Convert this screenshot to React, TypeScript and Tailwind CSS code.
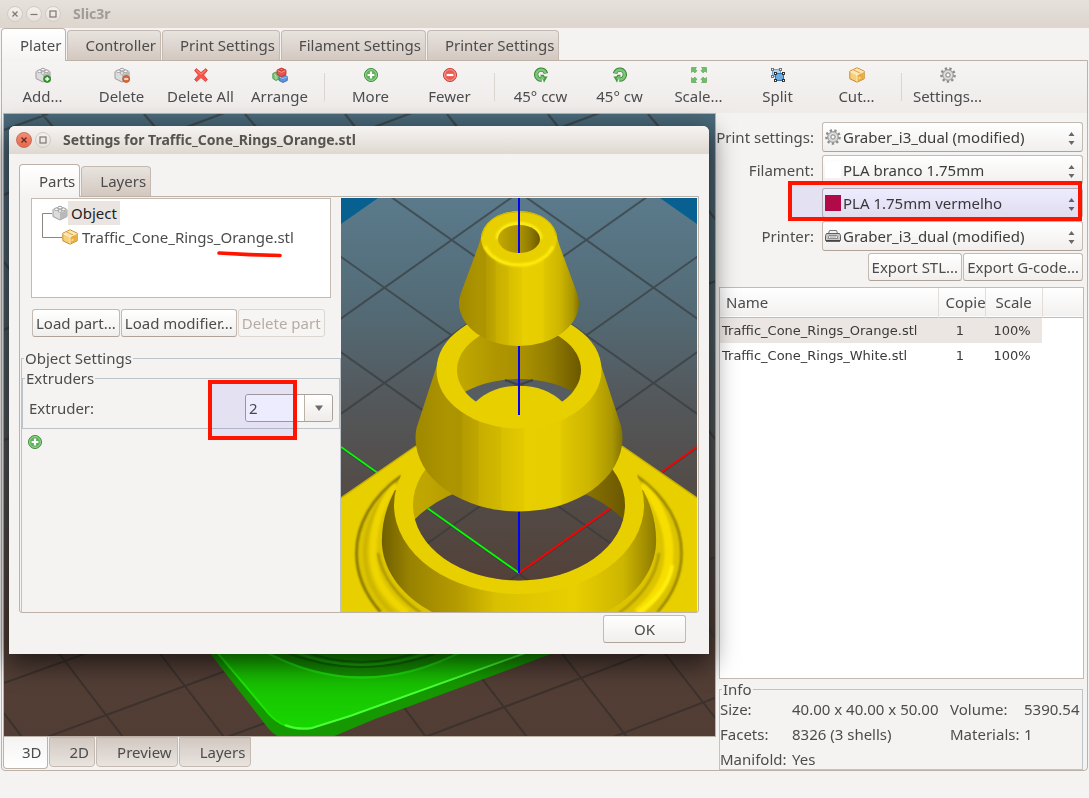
import React from "react";

const Svg = ({ children, className = "size-4 shrink-0" }: { children: React.ReactNode; className?: string }) => (
  <svg viewBox="0 0 16 16" className={className} aria-hidden="true">
    {children}
  </svg>
);

const BrickShape = () => (
  <g strokeLinejoin="round">
    <path d="M1 4.5 8 1.5l7 3v7L8 15l-7-3.5z" fill="#dcdcdc" stroke="#9b9b9b" />
    <path d="M8 8v7l7-3.5v-7z" fill="#b9b9b9" />
    <path d="M1 4.5 8 1.5l7 3L8 8z" fill="#f1f1f1" />
    <g fill="#fafafa" stroke="#8f8f8f" strokeWidth=".8">
      <ellipse cx="8" cy="2.6" rx="2" ry="1.3" />
      <ellipse cx="4.4" cy="4.3" rx="2" ry="1.3" />
      <ellipse cx="11.6" cy="4.3" rx="2" ry="1.3" />
      <ellipse cx="8" cy="6" rx="2" ry="1.3" />
    </g>
  </g>
);
const BrickIcon = () => <Svg><BrickShape /></Svg>;
const BrickAddIcon = () => (
  <Svg>
    <BrickShape />
    <circle cx="12.2" cy="12" r="3.5" fill="#3f9c35" stroke="#1f7a1b" strokeWidth=".7" />
    <path d="M12.2 10v4M10.2 12h4" stroke="#fff" strokeWidth="1.3" />
  </Svg>
);
const BrickDeleteIcon = () => (
  <Svg>
    <BrickShape />
    <circle cx="12.2" cy="12" r="3.5" fill="#dd6b3a" stroke="#b34a1c" strokeWidth=".7" />
    <path d="M10.2 12h4" stroke="#fff" strokeWidth="1.4" />
  </Svg>
);
const CrossIcon = () => (
  <Svg>
    <path d="M3.2 1.6 8 5.6l4.800-4L14.400 3.400 10.600 8l3.800 4.600-2 1.900L8 10.600l-4.400 3.900-2-1.900L5.400 8 1.600 3.400z" fill="#f4574a" stroke="#d8392e" strokeWidth=".8" strokeLinejoin="round" />
    <path d="M3.200 3 8 7.200 12.800 3" fill="none" stroke="#ff9a8f" strokeWidth=".8" />
  </Svg>
);
const BricksIcon = () => (
  <Svg>
    <g strokeLinejoin="round" strokeWidth=".8">
      <path d="M.8 6.500 4 5l4 1.500v5L4 13.500.8 11.500z" fill="#7cc576" stroke="#3d8f3a" />
      <path d="M2 7.500l2 1v4" stroke="#c6ecc2" fill="none" />
      <path d="M7 9.500l4-2 4.300 2v4L11 15.500l-4-2z" fill="#5c93d8" stroke="#3566a8" />
      <path d="M7.500 10l3.500 1.500 4-1.500" stroke="#a9cbf5" fill="none" />
      <path d="M5 3l4.500-2L14 3v4.500L9.500 9.800 5 7.500z" fill="#e8534a" stroke="#b92f29" />
      <path d="M5.500 3.600l4 1.800 4-1.800" stroke="#ff9e96" fill="none" />
      <ellipse cx="9.500" cy="2.600" rx="1.600" ry="1" fill="#ff8f87" stroke="#b92f29" />
    </g>
  </Svg>
);
const AddIcon = () => (
  <Svg>
    <circle cx="8" cy="8" r="6.500" fill="#5fb05a" stroke="#3c8e38" />
    <circle cx="8" cy="8" r="5.400" fill="none" stroke="#a7d9a2" strokeWidth=".9" />
    <path d="M8 4.600v6.800M4.600 8h6.800" stroke="#fff" strokeWidth="2.200" />
  </Svg>
);
const RemoveIcon = () => (
  <Svg>
    <circle cx="8" cy="8" r="6.500" fill="#ea5b52" stroke="#c8382f" />
    <circle cx="8" cy="8" r="5.400" fill="none" stroke="#f7a59f" strokeWidth=".9" />
    <path d="M4.600 8h6.800" stroke="#fff" strokeWidth="2.200" />
  </Svg>
);
const RotateShape = () => (
  <g>
    <path d="M13 6.500A5 5 0 1 0 8.600 12.600" fill="none" stroke="#3a8a35" strokeWidth="4.400" />
    <path d="M7.600 7.800h3l1 1.700h3l-1.600 2.500-2 3.800-1-3L7.600 10.500z" fill="#3f9a38" />
    <path d="M12.700 6.200A4.800 4.800 0 1 0 8.600 12.400" fill="none" stroke="#7fc67a" strokeWidth="2.600" />
    <path d="M8.500 9.500l2.500 2.500" stroke="#7fc67a" strokeWidth="2" />
  </g>
);
const CcwIcon = () => <Svg><RotateShape /></Svg>;
const CwIcon = () => <Svg><g transform="matrix(-1 0 0 1 16 0)"><RotateShape /></g></Svg>;
const ScaleIcon = () => (
  <Svg>
    <g fill="#6fbf69" stroke="#3e9038" strokeWidth=".5" strokeLinejoin="round">
      <path d="M.5.500h5L4.200 1.900 6 3.700 3.800 5.900 2 4.100.5 5.500z" />
      <path d="M15.500.500h-5l1.300 1.400L10 3.700l2.200 2.200L14 4.100l1.500 1.400z" />
      <path d="M.5 15.500h5l-1.300-1.400L6 12.300l-2.200-2.200L2 11.900.5 10.500z" />
      <path d="M15.500 15.500h-5l1.300-1.400L10 12.300l2.200-2.200 1.800 1.800 1.500-1.400z" />
    </g>
  </Svg>
);
const SplitIcon = () => (
  <Svg>
    <path d="M2.500 2.500h8v7h-8z" fill="#a9d3f2" stroke="#6aa5d4" />
    <path d="M5.500 6.500h8v7h-8z" fill="#6aabe2" stroke="#2e6fae" />
    <g fill="#fff" strokeWidth=".9">
      <rect x="1.500" y="1.500" width="2" height="2" stroke="#666" />
      <rect x="9.500" y="1.500" width="2" height="2" stroke="#666" />
      <rect x="1.500" y="8.500" width="2" height="2" stroke="#666" />
      <rect x="4.500" y="5.500" width="2" height="2" stroke="#222" />
      <rect x="12.500" y="5.500" width="2" height="2" stroke="#222" />
      <rect x="4.500" y="12.500" width="2" height="2" stroke="#222" />
      <rect x="12.500" y="12.500" width="2" height="2" stroke="#222" />
    </g>
  </Svg>
);
const PackageIcon = () => (
  <Svg>
    <g strokeLinejoin="round">
      <path d="M.8 4.200 8 .8l7.200 3.400v7.600L8 15.200.8 11.800z" fill="#f6cf7a" stroke="#c98a2c" />
      <path d="M8 8l6.700-3.400v7L8 14.800z" fill="#e9ae43" />
      <path d="M1.300 4.400 8 1.300l6.700 3.100L8 7.600z" fill="#fbe7b4" />
      <path d="M4.500 2.900l6.800 3.200v3" fill="none" stroke="#e0a040" />
      <path d="M1.300 4.600 8 7.900l6.700-3.300M8 7.900v6.800" fill="none" stroke="#fff2cf" strokeWidth=".9" />
      <path d="M9.500 10.500l2-1v2l-2 1z" fill="#f7e08c" />
    </g>
  </Svg>
);
const CogIcon = () => (
  <Svg>
    <circle cx="8" cy="8" r="6.600" fill="none" stroke="#8d8d8d" strokeWidth="2.400" strokeDasharray="2.300 2.307" />
    <circle cx="8" cy="8" r="5.400" fill="#c9c9c9" stroke="#8a8a8a" strokeWidth=".8" />
    <circle cx="8" cy="8" r="3.700" fill="none" stroke="#e4e4e4" />
    <circle cx="8" cy="8" r="2.100" fill="#f7f7f7" stroke="#868686" strokeWidth=".9" />
  </Svg>
);
const PrinterIcon = () => (
  <Svg>
    <path d="M3.500 5.500 4.500 2.500h7l1 3" fill="#f2f2f2" stroke="#777" />
    <path d="M1.500 5.500h13l1 2v5h-15v-5z" fill="#c8c8c8" stroke="#5e5e5e" strokeLinejoin="round" />
    <path d="M4 7.500h8l.8 3H3.200z" fill="#efefef" stroke="#777" strokeWidth=".8" />
    <path d="M1 13h14" stroke="#3f3f3f" strokeWidth="1.600" />
    <path d="M5 9h6" stroke="#888" strokeWidth=".8" />
  </Svg>
);

const WindowButton = ({ kind, close }: { kind: "close" | "min" | "max"; close?: boolean }) => (
  <button
    type="button"
    aria-label={kind}
    className={
      close
        ? "size-4 rounded-full border border-[#c9705a] bg-linear-to-b from-[#f28d76] to-[#e8664c] text-[#5c2a1e]"
        : "size-4 rounded-full border border-[#d3cbc4] bg-linear-to-b from-[#f4f1ee] to-[#e6e1dc] text-[#7d7872]"
    }
  >
    <svg viewBox="0 0 14 14" className="size-full" fill="none" stroke="currentColor" strokeWidth="1.200" aria-hidden="true">
      {kind === "close" && <path d="M4.500 4.500l5 5M9.500 4.500l-5 5" />}
      {kind === "min" && <path d="M3.500 7.500h7" />}
      {kind === "max" && <rect x="4" y="4" width="6" height="6" />}
    </svg>
  </button>
);

const tabStyles = {
  top: {
    active: "relative -mb-px h-[33px] rounded-t border border-b-0 border-[#bdb2a8] bg-linear-to-b from-white to-[#f5f3f2] pr-1 pl-[18px]",
    idle: "ml-px h-[30px] rounded-t border border-b-0 border-[#c4bab1] bg-linear-to-b from-[#e8e3de] to-[#d3c8c0] pr-1 pl-[17px]",
  },
  dialog: {
    active: "relative -mb-px h-[33px] rounded-t border border-b-0 border-[#bdb2a8] bg-linear-to-b from-white to-[#f5f3f2] pr-1 pl-[19px]",
    idle: "ml-px h-[30px] rounded-t border border-b-0 border-[#c4bab1] bg-linear-to-b from-[#e8e3de] to-[#d3c8c0] pr-1 pl-[18px]",
  },
  bottom: {
    active: "mr-px h-8 rounded-b border border-t-0 border-[#bdb2a8] bg-linear-to-b from-[#f5f3f2] to-white pr-[5px] pl-[18px]",
    idle: "mr-px h-[30px] rounded-b border border-[#c4bab1] bg-linear-to-b from-[#d2c8c1] to-[#e9e4df] pr-[5px] pl-5",
  },
};

const Tab = ({ label, active, kind = "top" }: { label: string; active?: boolean; kind?: keyof typeof tabStyles }) => (
  <button type="button" role="tab" aria-selected={!!active} className={tabStyles[kind][active ? "active" : "idle"]}>
    {label}
  </button>
);

const Tool = ({ icon, label }: { icon: React.ReactNode; label: string }) => (
  <button type="button" className="flex w-[79px] shrink-0 flex-col items-center gap-[3px] pt-[6px] leading-5 whitespace-nowrap">
    {icon}
    {label}
  </button>
);
const Separator = () => <div className="mt-3 mr-[6px] ml-[5px] h-7 w-px shrink-0 bg-[#dad5cf]" />;

const PushButton = ({ label, className = "", disabled }: { label: string; className?: string; disabled?: boolean }) => (
  <button
    type="button"
    disabled={disabled}
    className={
      "h-7 rounded-[3px] border px-[3px] whitespace-nowrap " +
      (disabled
        ? "border-[#dcd6d1] bg-[#f7f5f4] text-[#b5ada5] "
        : "border-[#c3bab2] border-b-[#aea299] bg-linear-to-b from-white to-[#f1efed] ") +
      className
    }
  >
    {label}
  </button>
);

const Preset = ({ id, label, icon, value }: { id: string; label?: string; icon: React.ReactNode; value: string }) => (
  <div className="flex h-[30px] items-center justify-end pr-px">
    {label && <label htmlFor={id} className="whitespace-nowrap">{label}</label>}
    <div className="relative ml-2 w-[261px] shrink-0">
      <select
        id={id}
        aria-label={label ? undefined : "Second filament"}
        className="h-[30px] w-full appearance-none rounded-[3px] border border-[#c3bab2] border-b-[#aea299] bg-linear-to-b from-white to-[#f1efed] pl-5 text-[#3c3c3c]"
      >
        <option>{value}</option>
      </select>
      <span className="pointer-events-none absolute top-[7px] left-[3px]">{icon}</span>
      <svg viewBox="0 0 7 13" className="pointer-events-none absolute top-[10px] right-2 h-[13px] w-[7px]" fill="#6b6763" aria-hidden="true">
        <path d="M3.500 0 6.500 4h-6zM3.500 13 6.500 9h-6z" />
      </svg>
    </div>
  </div>
);

const MainScene = () => (
  <svg viewBox="4 114 711 622" preserveAspectRatio="xMidYMid slice" className="absolute inset-0 size-full" role="img" aria-label="Build plate">
    <defs>
      <linearGradient id="bed" x1="0" y1="0" x2="0" y2="1">
        <stop offset="0" stopColor="#4a6a7b" />
        <stop offset=".5" stopColor="#50575b" />
        <stop offset=".85" stopColor="#533f36" />
        <stop offset="1" stopColor="#523d34" />
      </linearGradient>
      <linearGradient id="plate" x1="0" y1="0" x2="0" y2="1">
        <stop offset="0" stopColor="#17ae00" />
        <stop offset="1" stopColor="#18d800" />
      </linearGradient>
    </defs>
    <rect x="4" y="114" width="711" height="622" fill="url(#bed)" />
    <g stroke="#3a3f42" strokeOpacity=".75" strokeWidth="2.200">
      <path d="M42 114l12 14M144 114l12 14M245 114l12 14M345 114l11 14M447 114l11 14M548 114l11 14M648 114l12 14M4 130l44-16M184 128l43-16M374 127l43-16M562 127l43-16" />
      <path d="M4 195l6-3M4 262l6 8M4 330l6-3M4 440l6-2M708 210l8 10M708 284l8-3M708 430l8 10M708 560l8-3M708 628l8 10" />
    </g>
    <path d="M4 683l86-31M47 737l200-74M227 737l60-22M425 737l230-87M613 737l102-39M4 713l18 24M58 652l65 85M158 651l66 86M400 702l26 35M463 654l64 83M560 651l67 86M663 651l53 68" stroke="#3c322d" strokeWidth="2" fill="none" />
    <path d="M205 647 268 728 Q274 736 286 740L325 740 375 719 570 647z" fill="#159800" />
    <path d="M212 647 264 708Q282 733 312 728L350 716 540 647z" fill="url(#plate)" />
    <path d="M216 651 264 708Q282 733 312 728" fill="none" stroke="#1ce500" strokeWidth="2" />
    <path d="M285 725Q298 730 312 728L350 716 528 652" fill="none" stroke="#4bff35" strokeWidth="2" />
    <path d="M262 648Q360 708 465 648z" fill="#148f00" />
    <path d="M262 650Q360 705 465 650" fill="none" stroke="#1dd90a" strokeWidth="2.500" />
    <path d="M280 650Q360 684 445 650M300 650Q360 674 425 650" fill="none" stroke="#0e6f00" strokeWidth="2" />
    <path d="M290 650Q360 680 435 650" fill="none" stroke="#1ba80c" strokeWidth="2" />
  </svg>
);

const PartScene = () => (
  <svg viewBox="341 198 356 414" preserveAspectRatio="xMidYMid slice" className="size-full" role="img" aria-label="Traffic cone rings preview">
    <defs>
      <linearGradient id="floor" gradientUnits="userSpaceOnUse" x1="0" y1="198" x2="0" y2="612">
        <stop offset="0" stopColor="#5a7a8b" />
        <stop offset=".28" stopColor="#536a75" />
        <stop offset=".5" stopColor="#53575a" />
        <stop offset=".68" stopColor="#534d49" />
        <stop offset="1" stopColor="#523d34" />
      </linearGradient>
      <linearGradient id="wall">
        <stop offset="0" stopColor="#a08800" />
        <stop offset=".1" stopColor="#a89000" />
        <stop offset=".16" stopColor="#ad9500" />
        <stop offset=".22" stopColor="#ac9400" />
        <stop offset=".23" stopColor="#b59c00" />
        <stop offset=".3" stopColor="#bfa600" />
        <stop offset=".31" stopColor="#c8af00" />
        <stop offset=".41" stopColor="#d1b900" />
        <stop offset=".42" stopColor="#d9c000" />
        <stop offset=".52" stopColor="#e2c900" />
        <stop offset=".53" stopColor="#e8cf00" />
        <stop offset=".7" stopColor="#e6cd00" />
        <stop offset=".71" stopColor="#dfc700" />
        <stop offset=".84" stopColor="#cdb600" />
        <stop offset=".95" stopColor="#aa9600" />
        <stop offset="1" stopColor="#837300" />
      </linearGradient>
      <linearGradient id="inner">
        <stop offset="0" stopColor="#c2a900" />
        <stop offset=".3" stopColor="#b09700" />
        <stop offset=".55" stopColor="#a78f00" />
        <stop offset=".75" stopColor="#937d00" />
        <stop offset="1" stopColor="#6b5800" />
      </linearGradient>
      <linearGradient id="lower">
        <stop offset="0" stopColor="#6f5f00" />
        <stop offset=".1" stopColor="#988200" />
        <stop offset=".28" stopColor="#b69c00" />
        <stop offset=".42" stopColor="#dac100" />
        <stop offset=".7" stopColor="#e8cf00" />
        <stop offset=".88" stopColor="#cdb600" />
        <stop offset="1" stopColor="#8d7a00" />
      </linearGradient>
      <clipPath id="hole1"><ellipse cx="519" cy="505" rx="106" ry="75.500" /></clipPath>
      <clipPath id="hole2"><ellipse cx="519" cy="370" rx="62" ry="44" /></clipPath>
      <clipPath id="opening1"><ellipse cx="519" cy="572" rx="128" ry="91" /></clipPath>
      <filter id="soft" x="-20%" y="-20%" width="140%" height="140%"><feGaussianBlur stdDeviation="1" /></filter>
      <g id="grid">
        <rect x="341" y="198" width="356" height="414" fill="url(#floor)" />
        <path
          d="M333 60.400 705 324.100M333 155.800 705 419.500M333 251.200 705 514.900M333 346.600 705 610.300M333 442 705 705.700M705 60.400 333 324.100M705 155.800 333 419.500M705 251.200 333 514.900M705 346.600 333 610.300M705 442 333 705.700"
          stroke="#35393b"
          strokeOpacity=".65"
          strokeWidth="2"
        />
      </g>
    </defs>
    <use href="#grid" />
    <path d="M341 198h37l-37 26zM697 198h-37l37 26z" fill="#07608f" />
    <path d="M341 447 519 573" stroke="#0f0" strokeWidth="1.800" />
    <path d="M697 447 519 573" stroke="#f00" strokeWidth="1.800" />

    <path d="M341 498 416 446h206l75 52v114H341z" fill="#e8cf00" />
    <path d="M341 498 416 446M622 446l75 52" stroke="#c6b000" strokeWidth="1.500" />

    <g>
      <path d="M401 476C371 497 355 525 355 553c0 22 9 42 24 59h280c15-17 24-37 24-59 0-28-16-56-46-77z" fill="#dcc400" />
      <path d="M398 482C374 504 365 530 365 553c0 24 10 44 28 60" fill="none" stroke="#cdb500" strokeWidth="4" filter="url(#soft)" />
      <path d="M396 484C379 505 373 530 373 553c0 24 12 44 34 60" fill="none" stroke="#efd600" strokeWidth="7" filter="url(#soft)" />
      <path d="M642 484c18 20 27 45 27 69 0 24-12 44-32 60" fill="none" stroke="#f7de00" strokeWidth="9" filter="url(#soft)" />
      <path d="M672 565c-2 20-16 35-34 48" fill="none" stroke="#ffef10" strokeWidth="4" filter="url(#soft)" />
      <path d="M401 476C371 497 356.500 526 356.500 553c0 22 9 42 24 59" fill="none" stroke="#695b00" strokeWidth="2" filter="url(#soft)" />
      <path d="M637 476c30 21 44.500 49 44.500 77 0 22-9 42-24 59" fill="none" stroke="#7a6a00" strokeWidth="1.800" filter="url(#soft)" />
      <path d="M378 553c4 24 20 44 43 60M659 553c-3 24-18 44-40 60" fill="none" stroke="#a08b00" strokeWidth="2" filter="url(#soft)" />
    </g>
    <path d="M395 490C387 505 381 524 382 545c2 28 22 52 50 67h174c28-15 48-39 50-67 1-21-5-40-13-55z" fill="url(#lower)" />
    <ellipse cx="519" cy="505" rx="125" ry="89" fill="#e8cf00" />
    <ellipse cx="519" cy="505" rx="106" ry="75.500" fill="url(#inner)" />
    <g clipPath="url(#hole1)">
      <g clipPath="url(#opening1)">
        <use href="#grid" />
        <path d="M341 447 519 573" stroke="#0f0" strokeWidth="1.800" />
        <path d="M697 447 519 573" stroke="#f00" strokeWidth="1.800" />
      </g>
    </g>
    <path d="M519 505v68" stroke="#00f" strokeWidth="2" />

    <path d="M438 362 416.500 428Q415.500 433 415.500 438A103.500 73.500 0 0 0 622.500 438Q622.500 433 621 426L600 362z" fill="url(#wall)" />
    <ellipse cx="519" cy="370" rx="82.500" ry="58.500" fill="#e8cf00" />
    <g clipPath="url(#hole2)">
      <rect x="457" y="326" width="124" height="88" fill="url(#inner)" />
      <ellipse cx="519" cy="443" rx="90" ry="64" fill="#555d62" />
      <path d="M505 380l28 10M533 380l-28 10" stroke="#3d4245" strokeWidth="2" />
    </g>
    <path d="M475.500 402A53 38 0 0 1 562.500 402L560 412Q519 430 478 412z" fill="#e8cf00" />
    <path d="M519 340v75" stroke="#00f" strokeWidth="2" />

    <path d="M482 232Q481 238 478 247L461 293Q459 298 459 303A60 43 0 0 0 579 303Q579 298 577 293L560 247Q557 238 556 232z" fill="url(#wall)" />
    <ellipse cx="519" cy="238.500" rx="38" ry="27.500" fill="#e8cf00" />
    <path d="M485 246c5 11 17 19 34 19s29-8 34-19" fill="none" stroke="#ffee10" strokeWidth="3" filter="url(#soft)" />
    <path d="M482 236c2-14 16-24 37-24s35 10 37 24" fill="none" stroke="#c9b200" strokeWidth="1" />
    <path d="M497 239a22 15.500 0 0 1 44 0" fill="none" stroke="#fff01a" strokeWidth="3" filter="url(#soft)" />
    <ellipse cx="519" cy="239" rx="21" ry="14" fill="url(#inner)" />
    <path d="M519 198v55" stroke="#00f" strokeWidth="2" />
  </svg>
);

const SettingsDialog = () => (
  <section
    role="dialog"
    aria-label="Settings for Traffic_Cone_Rings_Orange.stl"
    className="absolute top-[126px] left-[9px] flex h-[528px] w-[700px] flex-col rounded-t-md bg-[#f5f3f2] shadow-[0_8px_26px_2px_rgba(0,0,0,0.6)]"
  >
    <header className="flex h-7 shrink-0 items-center gap-[3px] rounded-t-md bg-linear-to-b from-[#f6f4f2] to-[#dfd8d1] pl-[7px]">
      <WindowButton kind="close" close />
      <WindowButton kind="max" />
      <h2 className="ml-[9px] text-sm font-bold text-[#57534e]">Settings for Traffic_Cone_Rings_Orange.stl</h2>
    </header>
    <div role="tablist" className="mx-[10px] mt-[10px] flex h-8 shrink-0 items-end">
      <Tab label="Parts" active kind="dialog" />
      <Tab label="Layers" kind="dialog" />
    </div>
    <div className="mx-[10px] flex min-h-0 flex-1 rounded-b-[3px] border border-[#bdb2a8] pt-px pr-px">
      <div className="flex w-[321px] shrink-0 flex-col">
        <ul className="relative ml-[11px] h-[100px] w-[300px] border border-[#c4bab1] bg-white pt-[2px]">
          <svg viewBox="0 0 40 50" className="absolute top-0 left-0 h-[50px] w-10" fill="none" stroke="#8d857d" aria-hidden="true">
            <path d="M20 14.500H10.500V38.500H30" />
          </svg>
          <li className="relative flex h-6 items-center pl-5">
            <BrickIcon />
            <span className="h-6 bg-[#eae5e1] px-[3px] leading-6 text-[#222]">Object</span>
          </li>
          <li className="relative flex h-6 items-center gap-1 pl-[30px]">
            <PackageIcon />
            Traffic_Cone_Rings_Orange.stl
          </li>
          <svg viewBox="0 0 68 8" className="absolute top-[51px] left-[184px] h-2 w-[68px]" aria-hidden="true">
            <path d="M3 3Q34 5 64 5.500" fill="none" stroke="#ff1400" strokeWidth="3.600" strokeLinecap="round" />
          </svg>
        </ul>
        <div className="mt-[11px] ml-3 flex gap-px">
          <PushButton label="Load part..." />
          <PushButton label="Load modifier..." />
          <PushButton label="Delete part" disabled />
        </div>
        <fieldset className="mt-[11px] ml-px flex-1 border border-b-0 border-[#bcc3c9]">
          <legend className="ml-[2px] px-px leading-5">Object Settings</legend>
          <fieldset className="relative border border-[#bcc3c9] pb-[6px]">
            <legend className="ml-[2px] px-px leading-5">Extruders</legend>
            <div className="flex items-center justify-between pt-[6px] pr-[6px] pl-[6px]">
              <label htmlFor="extruder">Extruder:</label>
              <div className="flex h-7 w-[88px] rounded-[3px] border border-[#aaa19a] bg-white">
                <input id="extruder" defaultValue="2" className="w-[58px] rounded-l-[3px] bg-white pl-[3px] outline-none" />
                <button type="button" aria-label="Choose extruder" className="flex flex-1 items-center justify-center rounded-r-[3px] border-l border-[#bdb2a8] bg-linear-to-b from-white to-[#efecea]">
                  <svg viewBox="0 0 8 6" className="h-[6px] w-2" aria-hidden="true"><path d="M0 .5h8L4 6z" fill="#6f6b67" /></svg>
                </button>
              </div>
            </div>
            <div className="pointer-events-none absolute -top-2 right-[42px] h-[60px] w-[89px] border-4 border-[#ff1400]" />
            <div className="pointer-events-none absolute -top-1 right-[46px] h-[52px] w-[81px] bg-[#edecff] mix-blend-multiply" />
          </fieldset>
          <button type="button" aria-label="Add setting" className="mt-[5px] ml-[5px] block"><AddIcon /></button>
        </fieldset>
      </div>
      <div className="min-w-0 flex-1"><PartScene /></div>
    </div>
    <div className="mt-[2px] mr-[23px] mb-[11px] flex shrink-0 justify-end">
      <PushButton label="OK" className="w-[83px]" />
    </div>
  </section>
);

const parts = [
  { name: "Traffic_Cone_Rings_Orange.stl", copies: 1, scale: "100%" },
  { name: "Traffic_Cone_Rings_White.stl", copies: 1, scale: "100%" },
];

export default function App() {
  return (
    <div className="relative flex min-h-screen flex-col bg-[#f5f3f2] font-['Noto_Sans',sans-serif] text-[15px] text-[#4c4c4c]">
      <header className="flex h-7 shrink-0 items-center gap-[3px] bg-linear-to-b from-[#e6e1db] to-[#ddd5ce] pl-[7px]">
        <WindowButton kind="close" />
        <WindowButton kind="min" />
        <WindowButton kind="max" />
        <h1 className="ml-[9px] text-sm font-bold text-[#a19b95]">Slic3r</h1>
      </header>
      <nav role="tablist" className="flex h-8 shrink-0 items-end pl-px">
        <Tab label="Plater" active />
        <Tab label="Controller" />
        <Tab label="Print Settings" />
        <Tab label="Filament Settings" />
        <Tab label="Printer Settings" />
      </nav>
      <main className="mx-px flex flex-1 flex-col rounded-b border border-[#bdb2a8]">
        <div className="flex h-[52px] shrink-0 bg-linear-to-b from-[#f6f4f3] to-[#eeebe9] pl-px">
          <Tool icon={<BrickAddIcon />} label="Add..." />
          <Tool icon={<BrickDeleteIcon />} label="Delete" />
          <Tool icon={<CrossIcon />} label="Delete All" />
          <Tool icon={<BricksIcon />} label="Arrange" />
          <Separator />
          <Tool icon={<AddIcon />} label="More" />
          <Tool icon={<RemoveIcon />} label="Fewer" />
          <Separator />
          <Tool icon={<CcwIcon />} label="45° ccw" />
          <Tool icon={<CwIcon />} label="45° cw" />
          <Tool icon={<ScaleIcon />} label="Scale..." />
          <Tool icon={<SplitIcon />} label="Split" />
          <Tool icon={<PackageIcon />} label="Cut..." />
          <Separator />
          <Tool icon={<CogIcon />} label="Settings..." />
        </div>
        <div className="flex flex-1 gap-[3px] pr-[3px] pl-px">
          <div className="flex min-w-0 flex-1 flex-col">
            <div className="relative flex-1 overflow-hidden border border-[#bdb2a8]"><MainScene /></div>
            <div role="tablist" className="flex h-[33px] shrink-0 items-start">
              <Tab label="3D" active kind="bottom" />
              <Tab label="2D" kind="bottom" />
              <Tab label="Preview" kind="bottom" />
              <Tab label="Layers" kind="bottom" />
            </div>
          </div>
          <aside className="flex w-[365px] shrink-0 flex-col pt-[9px]">
            <div className="relative flex flex-col gap-[3px]">
              <Preset id="print" label="Print settings:" icon={<CogIcon />} value="Graber_i3_dual (modified)" />
              <Preset id="filament1" label="Filament:" icon={<span className="block size-4 bg-white" />} value="PLA branco 1.75mm" />
              <Preset id="filament2" icon={<span className="block size-4 bg-[#bf0a48]" />} value="PLA 1.75mm vermelho" />
              <Preset id="printer" label="Printer:" icon={<PrinterIcon />} value="Graber_i3_dual (modified)" />
              <div className="pointer-events-none absolute top-[59px] right-[2px] h-10 w-[294px] border-4 border-[#ff1400]" />
              <div className="pointer-events-none absolute top-[63px] right-[6px] h-8 w-[286px] bg-[#edecff] mix-blend-multiply" />
            </div>
            <div className="mt-[2px] flex justify-end gap-px pr-px">
              <PushButton label="Export STL..." />
              <PushButton label="Export G-code..." />
            </div>
            <div className="mt-[6px] flex-1 border border-[#c4bab1] bg-white">
              <table className="w-full table-fixed border-collapse">
                <colgroup>
                  <col className="w-[218px]" />
                  <col className="w-[47px]" />
                  <col className="w-[57px]" />
                  <col />
                </colgroup>
                <thead>
                  <tr className="h-[29px] border-b border-[#c4bab1] bg-linear-to-b from-white to-[#f3f1ef] text-left">
                    <th className="border-r border-[#e2ddd8] pl-[6px] font-normal">Name</th>
                    <th className="border-r border-[#e2ddd8] pl-[7px] font-normal">Copie</th>
                    <th className="border-r border-[#e2ddd8] pl-[10px] font-normal">Scale</th>
                    <th />
                  </tr>
                </thead>
                <tbody className="font-['DejaVu_Sans',sans-serif] text-[13px] text-[#3a3a3a]">
                  {parts.map((part, i) => (
                    <tr key={part.name} className="h-[26px]">
                      <td className={i === 0 ? "bg-[#ebe6e2] pl-[2px]" : "pl-[2px]"}>{part.name}</td>
                      <td className={i === 0 ? "bg-[#ebe6e2] pr-[3px] text-center" : "pr-[3px] text-center"}>{part.copies}</td>
                      <td className={i === 0 ? "bg-[#ebe6e2] pr-[3px] text-center" : "pr-[3px] text-center"}>{part.scale}</td>
                      <td />
                    </tr>
                  ))}
                </tbody>
              </table>
            </div>
            <fieldset className="mr-px border border-[#bcc3c9]">
              <legend className="ml-[2px] px-px leading-5">Info</legend>
              <dl className="grid grid-cols-[72px_158px_74px_1fr] gap-y-[5px] leading-5 whitespace-nowrap">
                <dt>Size:</dt>
                <dd>40.00 x 40.00 x 50.00</dd>
                <dt>Volume:</dt>
                <dd>5390.54</dd>
                <dt>Facets:</dt>
                <dd>8326 (3 shells)</dd>
                <dt>Materials:</dt>
                <dd>1</dd>
                <dt>Manifold:</dt>
                <dd>Yes</dd>
              </dl>
            </fieldset>
          </aside>
        </div>
      </main>
      <footer className="h-[27px] shrink-0" />
      <SettingsDialog />
    </div>
  );
}
